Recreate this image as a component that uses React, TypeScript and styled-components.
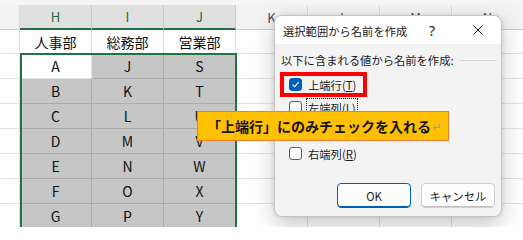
import React from 'react';
import styled, { createGlobalStyle } from 'styled-components';

const JP = `"Noto Sans CJK JP", "Noto Sans", sans-serif`;

const GlobalStyle = createGlobalStyle`
  html, body {
    margin: 0;
    padding: 0;
    background: #fff;
  }
  body {
    font-family: ${JP};
    overflow: hidden;
  }
`;

const Page = styled.div`
  position: relative;
  width: 523px;
  height: 227px;
  overflow: hidden;
  background: #fff;
`;

/* ---------- sheet ---------- */

const Sheet = styled.div`
  display: flex;
  flex-direction: column;
`;

const TopStrip = styled.div`
  height: 5px;
  background: #f5f5f5;
`;

const GridRow = styled.div<{ $h: number }>`
  display: grid;
  grid-template-columns: 20px repeat(7, 72px);
  height: ${p => p.$h}px;
`;

const HeadCell = styled.div<{ $sel?: boolean }>`
  box-sizing: border-box;
  display: flex;
  align-items: center;
  justify-content: center;
  font: 13px ${JP};
  color: ${p => (p.$sel ? '#1e6b41' : '#4a4a4a')};
  background: ${p => (p.$sel ? '#e0e0e0' : '#f3f3f3')};
  border-right: 1px solid ${p => (p.$sel ? '#c9c9c9' : '#dcdcdc')};
  border-bottom: ${p => (p.$sel ? '2px solid #217346' : '1px solid #c9c9c9')};
`;

const Cell = styled.div<{ $sel?: boolean }>`
  box-sizing: border-box;
  display: flex;
  align-items: center;
  justify-content: center;
  font: 14px ${JP};
  color: #111;
  background: ${p => (p.$sel ? '#c6c6c6' : '#fff')};
  border-right: 1px solid ${p => (p.$sel ? '#acacac' : '#e1e1e1')};
  border-bottom: 1px solid ${p => (p.$sel ? '#acacac' : '#e1e1e1')};
`;

// the range outline sits over the cells, like Excel draws it
const Selection = styled.div`
  position: absolute;
  left: 20px;
  top: 53px;
  width: 217px;
  height: 200px;
  box-sizing: border-box;
  border: 2px solid #217346;
  pointer-events: none;
`;

/* ---------- dialog ---------- */

const Dialog = styled.div`
  position: absolute;
  left: 274px;
  top: 15px;
  width: 228px;
  height: 202px;
  box-sizing: border-box;
  display: flex;
  flex-direction: column;
  border: 1px solid #c4c4c4;
  border-radius: 8px;
  overflow: hidden;
  background: #f3f3f3;
  box-shadow: 0 8px 22px rgba(0, 0, 0, 0.22), 0 0 4px rgba(0, 0, 0, 0.1);
  font: 11.3px ${JP};
  color: #1b1b1b;
`;

const TitleBar = styled.div`
  display: flex;
  align-items: center;
  height: 28px;
  padding-left: 8px;
  background: #fff;
`;

const Title = styled.div`
  flex: 1;
  padding-top: 2px;
`;

const TitleButton = styled.div`
  width: 46px;
  height: 28px;
  display: flex;
  align-items: center;
  justify-content: center;
  font: 14px "Noto Sans", sans-serif;
  color: #1b1b1b;
`;

const Body = styled.div`
  flex: 1;
  display: flex;
  flex-direction: column;
  padding: 8px 6px 8px 6px;
`;

const GroupHead = styled.div`
  display: flex;
  align-items: center;
  height: 16px;
  gap: 6px;
  margin-right: -2px;
`;

const Rule = styled.div`
  flex: 1;
  height: 1px;
  background: #d6d6d6;
`;

const CheckList = styled.div`
  display: flex;
  flex-direction: column;
  align-items: flex-start;
  margin-top: 5px;
  padding-left: 8px;
`;

const CheckRow = styled.div<{ $marked?: boolean }>`
  position: relative;
  display: inline-flex;
  align-items: center;
  gap: 5px;
  height: 23px;

  &::before {
    content: '';
    display: ${p => (p.$marked ? 'block' : 'none')};
    position: absolute;
    left: -9px;
    top: -1px;
    right: -10px;
    bottom: -1px;
    border: 4px solid #ff0000;
  }
`;

const Box = styled.div<{ $on?: boolean }>`
  box-sizing: border-box;
  width: 13px;
  height: 13px;
  border-radius: 3px;
  display: flex;
  align-items: center;
  justify-content: center;
  background: ${p => (p.$on ? '#005fb8' : '#fbfbfb')};
  border: 1px solid ${p => (p.$on ? '#005fb8' : '#5c5c5c')};
`;

const Label = styled.span<{ $focus?: boolean }>`
  line-height: 18px;
  padding: 0 1px;
  outline: ${p => (p.$focus ? '1px dotted #222' : 'none')};
`;

const ButtonRow = styled.div`
  margin-top: auto;
  display: flex;
  justify-content: flex-end;
  gap: 10px;
`;

const Button = styled.div<{ $primary?: boolean }>`
  box-sizing: border-box;
  width: 74px;
  height: 25px;
  display: flex;
  align-items: center;
  justify-content: center;
  border-radius: 4px;
  background: #fdfdfd;
  border: 1px solid ${p => (p.$primary ? '#005fb8' : '#d0d0d0')};
  box-shadow: ${p => (p.$primary ? 'inset 0 -1px 0 #005fb8' : 'inset 0 -1px 0 #c2c2c2')};
`;

/* ---------- callout ---------- */

const Callout = styled.div`
  position: absolute;
  left: 197px;
  top: 111px;
  width: 252px;
  height: 30px;
  box-sizing: border-box;
  display: flex;
  align-items: center;
  padding-left: 9px;
  background: #ffc000;
  border: 1px solid #ed7d31;
  font: bold 14px ${JP};
  color: #151515;
`;

const Return = styled.span`
  font: 11px ${JP};
  color: #a0a0a0;
  margin-left: 1px;
`;

const Check = () => (
  <svg width="9" height="9" viewBox="0 0 9 9">
    <path d="M1.6 4.7 L3.6 6.6 L7.5 2.4" fill="none" stroke="#fff" strokeWidth="1.1" />
  </svg>
);

const Close = () => (
  <svg width="10" height="10" viewBox="0 0 10 10">
    <path d="M0.5 0.5 L9.5 9.5 M9.5 0.5 L0.5 9.5" stroke="#1b1b1b" strokeWidth="1" />
  </svg>
);

const columns = ['', 'H', 'I', 'J', 'K', 'L', 'M', 'N'];

const rows = [
  ['人事部', '総務部', '営業部'],
  ['A', 'J', 'S'],
  ['B', 'K', 'T'],
  ['C', 'L', 'U'],
  ['D', 'M', 'V'],
  ['E', 'N', 'W'],
  ['F', 'O', 'X'],
  ['G', 'P', 'Y'],
];

function App() {
  return (
    <Page>
      <GlobalStyle />
      <Sheet>
        <TopStrip />
        <GridRow $h={25}>
          {columns.map((c, i) => (
            <HeadCell key={i} $sel={i >= 1 && i <= 3}>{c}</HeadCell>
          ))}
        </GridRow>
        {rows.map((r, ri) => (
          <GridRow key={ri} $h={ri === 0 ? 24 : 25}>
            <Cell />
            {r.map((v, ci) => (
              <Cell key={ci} $sel={ri > 0 && !(ri === 1 && ci === 0)}>{v}</Cell>
            ))}
            <Cell />
            <Cell />
            <Cell />
            <Cell />
          </GridRow>
        ))}
      </Sheet>
      <Selection />

      <Dialog>
        <TitleBar>
          <Title>選択範囲から名前を作成</Title>
          <TitleButton>?</TitleButton>
          <TitleButton><Close /></TitleButton>
        </TitleBar>
        <Body>
          <GroupHead>
            <span>以下に含まれる値から名前を作成:</span>
            <Rule />
          </GroupHead>
          <CheckList>
            <CheckRow $marked>
              <Box $on><Check /></Box>
              <Label>上端行(<u>T</u>)</Label>
            </CheckRow>
            <CheckRow>
              <Box />
              <Label $focus>左端列(<u>L</u>)</Label>
            </CheckRow>
            <CheckRow>
              <Box />
              <Label>下端行(<u>B</u>)</Label>
            </CheckRow>
            <CheckRow>
              <Box />
              <Label>右端列(<u>R</u>)</Label>
            </CheckRow>
          </CheckList>
          <ButtonRow>
            <Button $primary>OK</Button>
            <Button>キャンセル</Button>
          </ButtonRow>
        </Body>
      </Dialog>

      <Callout>
        「上端行」にのみチェックを入れる<Return>↵</Return>
      </Callout>
    </Page>
  );
}

export default App;
